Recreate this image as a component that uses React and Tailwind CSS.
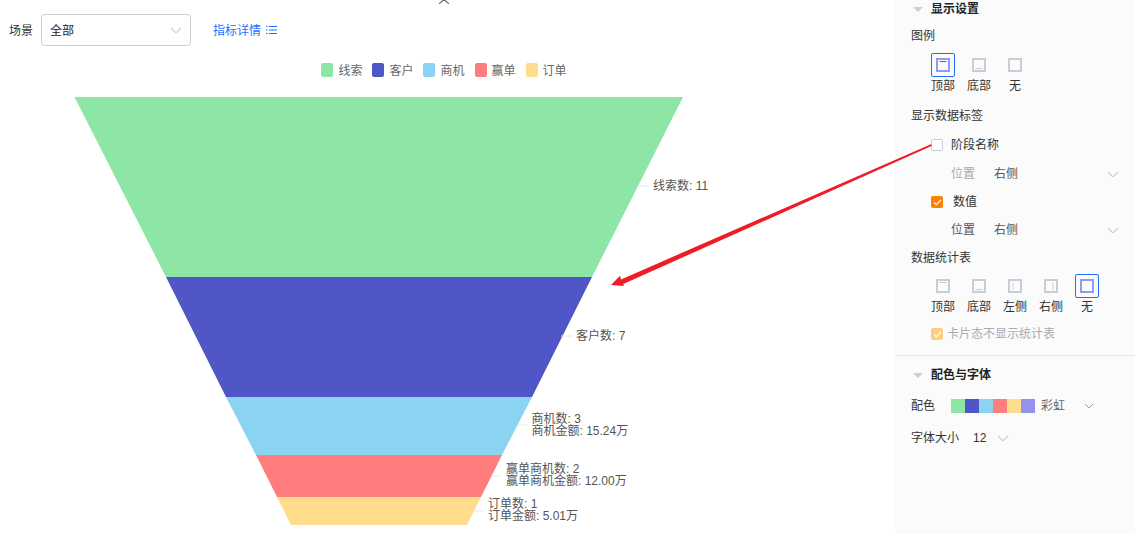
import React from 'react';

const font = { cjk: 'font-["Liberation_Sans","Noto_Sans_CJK_SC",sans-serif]' };

const legend = [
  { name: '线索', color: 'bg-[#8de5a6]' },
  { name: '客户', color: 'bg-[#5156c6]' },
  { name: '商机', color: 'bg-[#8ad4f2]' },
  { name: '赢单', color: 'bg-[#ff7d7d]' },
  { name: '订单', color: 'bg-[#ffdd8c]' },
];

const palette = ['bg-[#8de5a6]', 'bg-[#5156c6]', 'bg-[#8ad4f2]', 'bg-[#ff7d7d]', 'bg-[#ffdd8c]', 'bg-[#9393ec]'];

const funnel = [
  { points: '74.5,97 683,97 592,277 166,277', fill: '#8de5a6' },
  { points: '166,277 592,277 532,397 226,397', fill: '#5156c6' },
  { points: '226,397 532,397 502,455 256,455', fill: '#8ad4f2' },
  { points: '256,455 502,455 481,497 277,497', fill: '#ff7d7d' },
  { points: '277,497 481,497 467,525 291,525', fill: '#ffdd8c' },
];

const labels = [
  { x: 653, line: [638, 649, 186], rows: [['线索数: 11', 190]] },
  { x: 576, line: [561, 572, 336], rows: [['客户数: 7', 340]] },
  { x: 531.5, line: [517, 527, 425], rows: [['商机数: 3', 423], ['商机金额: 15.24万', 435]] },
  { x: 506, line: [491, 501, 476], rows: [['赢单商机数: 2', 473], ['赢单商机金额: 12.00万', 485]] },
  { x: 488, line: [473, 483, 511], rows: [['订单数: 1', 508], ['订单金额: 5.01万', 520]] },
];

function Chevron({ className = 'stroke-[#c9cdd8]', size = 12 }) {
  return (
    <svg width={size} height={size * 0.58} viewBox="0 0 12 7" fill="none" className={className}>
      <path d="M1 1l5 5 5-5" strokeWidth="1.1" />
    </svg>
  );
}

function Caret() {
  return (
    <svg width="10" height="5" viewBox="0 0 10 5" className="fill-[#c9cdd8]">
      <path d="M0 0h10L5 5z" />
    </svg>
  );
}

function LayoutIcon({ type, active }) {
  const lines = {
    top: 'M3.5 3.5h7',
    bottom: 'M3.5 10.5h7',
    left: 'M5 3.5v7',
    right: 'M9 3.5v7',
  };
  return (
    <svg width="14" height="14" viewBox="0 0 14 14" fill="none">
      <rect x="1" y="1" width="12" height="12" strokeWidth="2" stroke={active ? '#8f9bf7' : '#c9cdd8'} />
      {lines[type] && <path d={lines[type]} stroke={active ? '#1f6fff' : '#c9cdd8'} strokeWidth="1" />}
    </svg>
  );
}

function LayoutOption({ type, label, active }) {
  return (
    <div className="w-[36px] flex flex-col items-center">
      <div className={`w-[24px] h-[24px] rounded-[2px] flex items-center justify-center border ${active ? 'border-[#1f6fff]' : 'border-transparent'}`}>
        <LayoutIcon type={type} active={active} />
      </div>
      <span className="mt-[1px] h-[16px] leading-[16px] text-[12px] text-[#333]">{label}</span>
    </div>
  );
}

function Check({ disabled }) {
  return (
    <span className={`w-[12px] h-[12px] rounded-[2px] flex items-center justify-center ${disabled ? 'bg-[#ffcd80]' : 'bg-[#ff8000]'}`}>
      <svg width="9" height="7" viewBox="0 0 9 7" fill="none" stroke="#fff" strokeWidth="1.2">
        <path d="M1 3.5l2.3 2.2L8 1" />
      </svg>
    </span>
  );
}

function PositionRow({ className, labelColor }) {
  return (
    <div className={`h-[16px] flex items-center text-[12px] pl-[40px] ${className}`}>
      <span className={`w-[43px] ${labelColor}`}>位置</span>
      <span className="text-[#555]">右侧</span>
      <span className="ml-[89px] flex"><Chevron /></span>
    </div>
  );
}

export default function App() {
  return (
    <div className={`relative w-[1135px] h-[534px] flex overflow-hidden bg-white ${font.cjk}`}>
      <div className="relative w-[895px] shrink-0">
        <svg width="12" height="4" viewBox="0 0 12 4" fill="none" className="absolute left-[438px] top-0 stroke-[#666]">
          <path d="M1 4l5-4.5L11 4" strokeWidth="1.1" />
        </svg>

        <div className="pl-[9px] pt-[14px] flex items-center text-[12px]">
          <span className="w-[32px] pt-[2px] text-[#333]">场景</span>
          <div className="w-[150px] h-[32px] rounded-[4px] border border-[#c9cdd8] flex items-center justify-between pl-[8px] pr-[8px] text-[#222]">
            <span className="pt-[2px]">全部</span>
            <Chevron />
          </div>
          <a className="ml-[22px] text-[#1f6fff] flex items-center gap-[5px]">
            <span className="pt-[2px]">指标详情</span>
            <svg width="11" height="10" viewBox="0 0 11 10" fill="none" stroke="#1f6fff" strokeWidth="1">
              <path d="M0 1.5h1.5M3 1.5h8M0 5h1.5M3 5h8M0 8.5h1.5M3 8.5h8" />
            </svg>
          </a>
        </div>

        <div className="mt-[17px] pr-[7px] h-[14px] flex justify-center gap-[10px]">
          {legend.map((item) => (
            <div key={item.name} className="flex items-center gap-[5px] text-[12px] text-[#666]">
              <span className={`w-[12px] h-[14px] rounded-[2px] ${item.color}`} />
              <span className="pt-[2px]">{item.name}</span>
            </div>
          ))}
        </div>

        <svg width="895" height="454" viewBox="0 80 895 454" className="block mt-[3px]">
          {funnel.map((seg) => (
            <polygon key={seg.fill} points={seg.points} fill={seg.fill} />
          ))}
          {labels.map((label) => (
            <g key={label.x}>
              <line x1={label.line[0]} x2={label.line[1]} y1={label.line[2]} y2={label.line[2]} stroke="#e5e6eb" />
              {label.rows.map(([text, y]) => (
                <text key={text} x={label.x} y={y} className="text-[12px] fill-[#555]">{text}</text>
              ))}
            </g>
          ))}
        </svg>
      </div>

      <div className="flex-1 pt-[1px] bg-[#fbfbfc] text-[12px] text-[#333]">
        <div className="h-[16px] pl-[18px] flex items-center gap-[8px] font-bold text-[#222]">
          <Caret /> 显示设置
        </div>
        <div className="mt-[11px] h-[16px] pl-[16px] leading-[16px]">图例</div>
        <div className="mt-[9px] pl-[30px] flex">
          <LayoutOption type="top" label="顶部" active />
          <LayoutOption type="bottom" label="底部" />
          <LayoutOption label="无" />
        </div>
        <div className="mt-[14px] h-[16px] pl-[16px] leading-[16px]">显示数据标签</div>
        <div className="mt-[13px] h-[16px] pl-[36px] flex items-center gap-[8px]">
          <span className="w-[12px] h-[12px] rounded-[2px] border border-[#c9cdd8] bg-white" />
          阶段名称
        </div>
        <PositionRow className="mt-[13px] pl-[56px]" labelColor="text-[#aaa]" />
        <div className="mt-[12px] h-[16px] pl-[36px] flex items-center gap-[10px]">
          <Check />
          数值
        </div>
        <PositionRow className="mt-[12px] pl-[56px]" labelColor="text-[#555]" />
        <div className="mt-[12px] h-[16px] pl-[16px] leading-[16px]">数据统计表</div>
        <div className="mt-[8px] pl-[30px] flex">
          <LayoutOption type="top" label="顶部" />
          <LayoutOption type="bottom" label="底部" />
          <LayoutOption type="left" label="左侧" />
          <LayoutOption type="right" label="右侧" />
          <LayoutOption label="无" active />
        </div>
        <div className="mt-[11px] h-[16px] pl-[36px] flex items-center gap-[4px] text-[#a8abb3]">
          <Check disabled />
          卡片态不显示统计表
        </div>
        <div className="mt-[13px] h-px bg-[#e5e6eb]" />
        <div className="mt-[11px] h-[16px] pl-[18px] flex items-center gap-[8px] font-bold text-[#222]">
          <Caret /> 配色与字体
        </div>
        <div className="mt-[15px] h-[16px] pl-[16px] flex items-center">
          <span className="w-[40px]">配色</span>
          <div className="flex">
            {palette.map((color) => (
              <span key={color} className={`w-[14px] h-[14px] ${color}`} />
            ))}
          </div>
          <span className="ml-[6px] text-[#666]">彩虹</span>
          <span className="ml-[19px] flex"><Chevron size={10} className="stroke-[#c08a5c]" /></span>
        </div>
        <div className="mt-[16px] h-[16px] pl-[16px] flex items-center">
          <span className="w-[62px]">字体大小</span>
          <span className="w-[24px]">12</span>
          <Chevron />
        </div>
      </div>

      <svg width="1135" height="534" viewBox="0 0 1135 534" className="absolute left-0 top-0 pointer-events-none">
        <polygon points="931,144.2 932,145.8 623.2,284 624,286 611,285 620,275.7 621,279.4" fill="#ee1c25" />
      </svg>
    </div>
  );
}
